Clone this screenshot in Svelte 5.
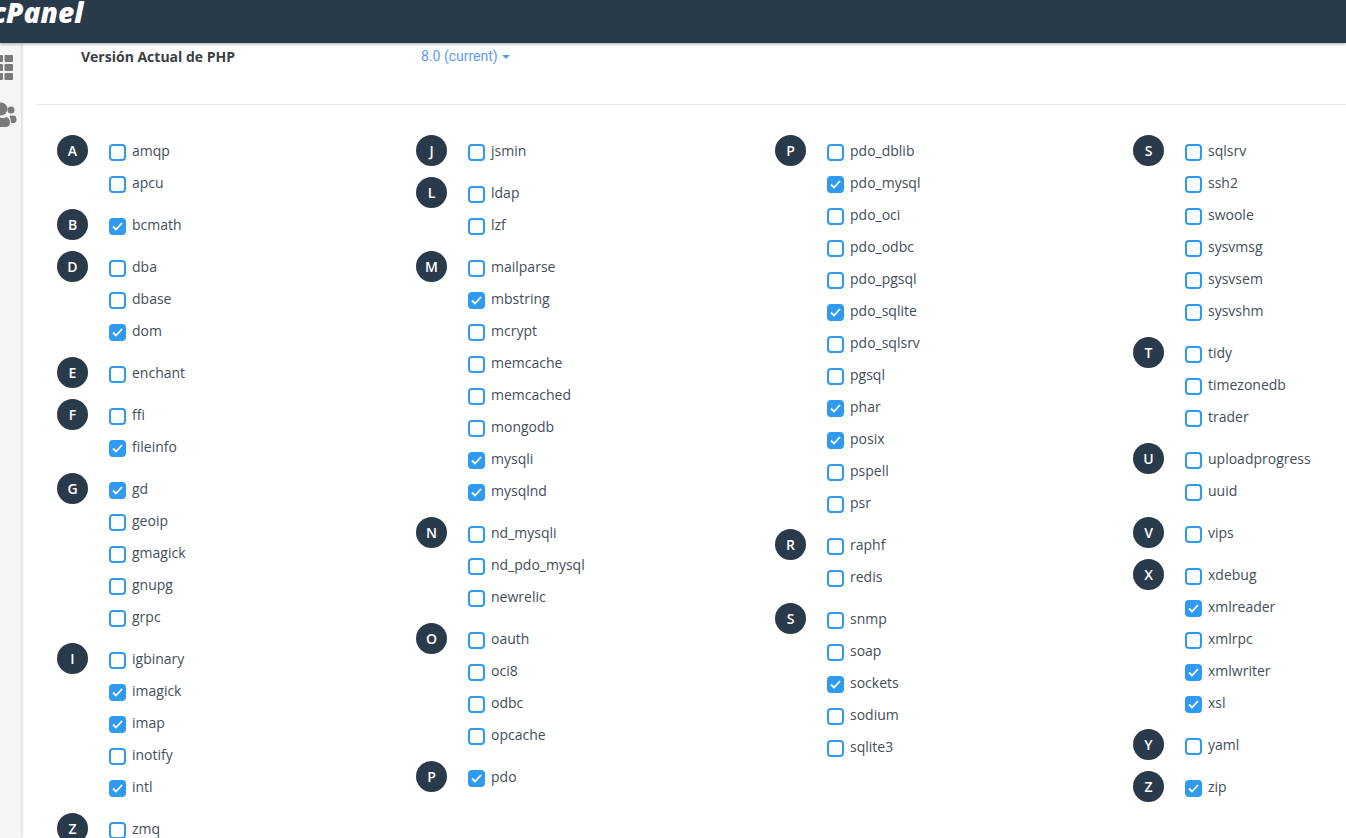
<script>
  // "*" marks an enabled extension
  const columns = [
    [
      ['A', 'amqp apcu'],
      ['B', 'bcmath*'],
      ['D', 'dba dbase dom*'],
      ['E', 'enchant'],
      ['F', 'ffi fileinfo*'],
      ['G', 'gd* geoip gmagick gnupg grpc'],
      ['I', 'igbinary imagick* imap* inotify intl*'],
      ['Z', 'zmq']
    ],
    [
      ['J', 'jsmin'],
      ['L', 'ldap lzf'],
      ['M', 'mailparse mbstring* mcrypt memcache memcached mongodb mysqli* mysqlnd*'],
      ['N', 'nd_mysqli nd_pdo_mysql newrelic'],
      ['O', 'oauth oci8 odbc opcache'],
      ['P', 'pdo*']
    ],
    [
      ['P', 'pdo_dblib pdo_mysql* pdo_oci pdo_odbc pdo_pgsql pdo_sqlite* pdo_sqlsrv pgsql phar* posix* pspell psr'],
      ['R', 'raphf redis'],
      ['S', 'snmp soap sockets* sodium sqlite3']
    ],
    [
      ['S', 'sqlsrv ssh2 swoole sysvmsg sysvsem sysvshm'],
      ['T', 'tidy timezonedb trader'],
      ['U', 'uploadprogress uuid'],
      ['V', 'vips'],
      ['X', 'xdebug xmlreader* xmlrpc xmlwriter* xsl*'],
      ['Y', 'yaml'],
      ['Z', 'zip*']
    ]
  ].map((groups) =>
    groups.map(([letter, names]) => ({
      letter,
      items: names.split(' ').map((n) => ({ name: n.replace('*', ''), on: n.endsWith('*') }))
    }))
  );
</script>

<div class="page">
  <header class="topbar">
    <span class="logo">cPanel</span>
  </header>

  <div class="body">
    <aside class="sidebar">
      <svg width="20" height="26" viewBox="0 0 20 26" fill="#7a7a7a">
        <rect x="-5" y="0" width="8" height="7" rx="1" />
        <rect x="4.500" y="0" width="8.500" height="7" rx="1" />
        <rect x="-5" y="9" width="8" height="7" rx="1" />
        <rect x="4.500" y="9" width="8.500" height="7" rx="1" />
        <rect x="-5" y="18" width="8" height="7" rx="1" />
        <rect x="4.500" y="18" width="8.500" height="7" rx="1" />
      </svg>
      <svg width="20" height="26" viewBox="0 0 20 26" fill="#7a7a7a">
        <circle cx="1" cy="7" r="6.500" />
        <circle cx="11" cy="8" r="3.500" />
        <path d="M-6 21q0-6 5-6.500q2 1.500 4 1.500q2 0 3-1q4 .5 4 6q0 4-5 4h-6q-5 0-5-4z" />
        <path d="M11 13.500q1.500 .5 3 0q2.500 .5 2.500 4.500q0 3-3 3h-2.500q0-4-1.500-6.500q.8-1 1.500-1.500z" />
      </svg>
    </aside>

    <main class="content">
      <div class="version">
        <span class="version-label">Versión Actual de PHP</span>
        <span class="version-value">8.0 (current) <i class="caret"></i></span>
      </div>

      <div class="extensions">
        {#each columns as groups}
          <div class="column">
            {#each groups as group}
              <section class="group">
                <span class="badge">{group.letter}</span>
                <ul>
                  {#each group.items as item}
                    <li>
                      <span class="box" class:on={item.on}>
                        {#if item.on}
                          <svg width="11" height="9" viewBox="0 0 11 9" fill="none" stroke="#fff" stroke-width="1.800">
                            <path d="M1 4.500l3 3 6-6.500" />
                          </svg>
                        {/if}
                      </span>
                      <span class="name">{item.name}</span>
                    </li>
                  {/each}
                </ul>
              </section>
            {/each}
          </div>
        {/each}
      </div>
    </main>
  </div>
</div>

<style>
  :global(body) {
    margin: 0;
    background: #fff;
  }

  .page {
    position: relative;
    width: 1346px;
    height: 838px;
    overflow: hidden;
    font-family: 'Open Sans', sans-serif;
    font-size: 14px;
    color: #444e58;
  }

  .topbar {
    position: relative;
    z-index: 2;
    height: 43px;
    background: #293a4a;
    box-shadow: 0 1px 3px rgba(0, 0, 0, 0.35);
    overflow: hidden;
  }

  .logo {
    display: block;
    margin: -7px 0 0 -8px;
    font-size: 28px;
    font-weight: 800;
    font-style: italic;
    line-height: 38px;
    color: #fff;
  }

  .body {
    display: flex;
    height: 795px;
  }

  .sidebar {
    flex: none;
    width: 21px;
    padding-top: 12px;
    box-sizing: border-box;
    background: #f5f5f5;
    box-shadow: 1px 0 3px rgba(0, 0, 0, 0.18);
    display: flex;
    flex-direction: column;
    gap: 21px;
  }

  .content {
    flex: 1;
    min-width: 0;
    margin-left: 15px;
  }

  .version {
    display: flex;
    height: 62px;
    padding: 4px 0 0 45px;
    box-sizing: border-box;
    border-bottom: 1px solid #e8e8e8;
    line-height: 20px;
  }

  .version-label {
    width: 340px;
    font-weight: 700;
    color: #3a3f45;
  }

  .version-value {
    font-family: Roboto, sans-serif;
    color: #5b9bf0;
    line-height: 19px;
  }

  .caret {
    display: inline-block;
    margin-left: 1px;
    vertical-align: middle;
    border-top: 4px solid #5b9bf0;
    border-left: 4px solid transparent;
    border-right: 4px solid transparent;
  }

  .extensions {
    display: grid;
    grid-template-columns: 359px 359px 358px 358px;
    padding: 30px 0 0 21px;
  }

  .column {
    display: flex;
    flex-direction: column;
    gap: 10px;
  }

  .group {
    display: flex;
    align-items: flex-start;
  }

  .badge {
    flex: none;
    width: 31px;
    height: 31px;
    margin-right: 21px;
    border-radius: 50%;
    background: #293a4a;
    color: #fff;
    font-weight: 600;
    font-size: 14px;
    line-height: 31px;
    text-align: center;
  }

  ul {
    list-style: none;
    margin: 0;
    padding: 0;
  }

  li {
    display: flex;
    align-items: center;
    height: 32px;
  }

  .box {
    flex: none;
    width: 17px;
    height: 17px;
    margin: 2px 6px 0 0;
    box-sizing: border-box;
    border: 2px solid #2f9bf0;
    border-radius: 4px;
    background: #fff;
    display: flex;
    align-items: center;
    justify-content: center;
  }

  .box.on {
    background: #2f9bf0;
  }

  .name {
    line-height: 20px;
  }
</style>
